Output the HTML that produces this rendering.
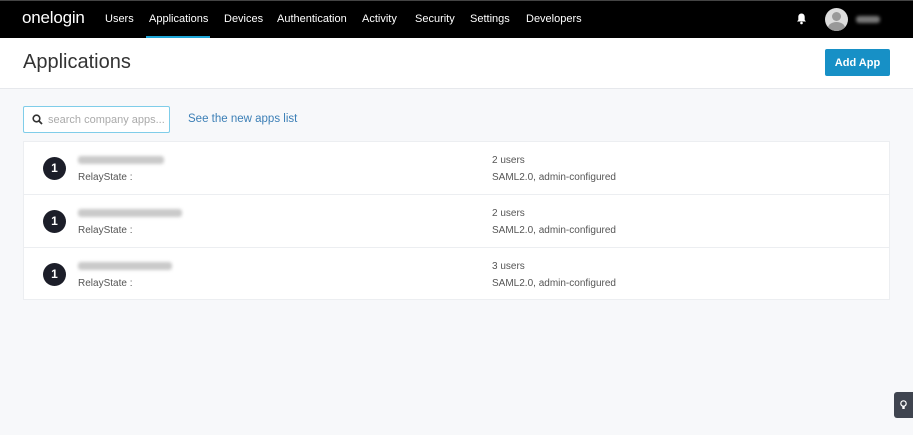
<!DOCTYPE html>
<html><head><meta charset="utf-8"><style>
*{margin:0;padding:0;box-sizing:border-box}
body{width:913px;height:435px;overflow:hidden;background:#f7f8fa;font-family:"Liberation Sans",sans-serif;position:relative}
.nav{position:absolute;top:0;left:0;width:913px;height:38px;background:#000;border-top:1px solid #444}
.logo{position:absolute;left:22px;top:7px;color:#fff;font-size:17px;letter-spacing:-0.2px}
.nav a{position:absolute;top:12px;color:#fff;font-size:11px;text-decoration:none}
.ul{position:absolute;left:146px;top:35px;width:64px;height:3px;background:#1ea6d7}
.hdr{position:absolute;top:38px;left:0;width:913px;height:51px;background:#fff;border-bottom:1px solid #e6e8ec}
.hdr h1{position:absolute;left:23px;top:13px;font-weight:normal;font-size:20px;color:#333}
.btn{position:absolute;left:825px;top:11px;width:65px;height:27px;background:#1790c6;color:#fff;font-size:11px;font-weight:bold;text-align:center;line-height:28px;border-radius:2px}
.search{position:absolute;left:23px;top:106px;width:147px;height:27px;background:#fff;border:1px solid #7fcde9;border-radius:2px}
.search span{position:absolute;left:24px;top:7px;color:#aaa;font-size:11px}
.link{position:absolute;left:188px;top:113px;color:#3c7fb6;font-size:11.5px}
.list{position:absolute;left:23px;top:141px;width:867px;height:159px;background:#fff;border:1px solid #eceef1}
.row{position:relative;height:53px;border-bottom:1px solid #eceef1}
.row:last-child{border-bottom:none}
.ic{position:absolute;left:19px;top:15px;width:23px;height:23px;border-radius:50%;background:#1c1e29;color:#fff;font-weight:bold;font-size:12px;text-align:center;line-height:23px}
.bl{position:absolute;left:54px;top:14px;height:8px;background:#c9c9c9;border-radius:3px;filter:blur(1.5px)}
.rs{position:absolute;left:54px;top:30px;font-size:10px;color:#555}
.u{position:absolute;left:468px;top:13px;font-size:10px;color:#555}
.s{position:absolute;left:468px;top:30px;font-size:10px;color:#555}
.tip{position:absolute;left:894px;top:392px;width:19px;height:26px;background:#3f444f;border-radius:3px 0 0 3px}
</style></head><body>
<div class="nav">
<div class="logo">onelogin</div>
<a style="left:105px">Users</a><a style="left:149px">Applications</a><a style="left:224px">Devices</a><a style="left:277px">Authentication</a><a style="left:362px">Activity</a><a style="left:415px">Security</a><a style="left:470px">Settings</a><a style="left:526px">Developers</a>
<div class="ul"></div>
<svg style="position:absolute;left:796px;top:12px" width="11" height="12" viewBox="0 0 11 12"><path d="M5.5 0.5c-2 0-3.2 1.5-3.2 3.5v3L1 8.5h9L8.7 7V4c0-2-1.2-3.5-3.2-3.5z" fill="#fff"/><circle cx="5.5" cy="10" r="1.3" fill="#fff"/></svg>
<div style="position:absolute;left:825px;top:7px;width:23px;height:23px;border-radius:50%;background:#ddd;overflow:hidden"><div style="position:absolute;left:7px;top:4px;width:9px;height:9px;border-radius:50%;background:#999"></div><div style="position:absolute;left:3px;top:14px;width:17px;height:12px;border-radius:50%;background:#999"></div></div>
<div style="position:absolute;left:856px;top:15px;width:24px;height:7px;background:#777;border-radius:3px;filter:blur(1.5px)"></div>
</div>
<div class="hdr"><h1>Applications</h1><div class="btn">Add App</div></div>
<div class="search"><svg style="position:absolute;left:8px;top:7px" width="11" height="11" viewBox="0 0 11 11"><circle cx="4.5" cy="4.5" r="3.3" fill="none" stroke="#333" stroke-width="1.6"/><path d="M7 7l3 3" stroke="#333" stroke-width="1.8"/></svg><span>search company apps...</span></div>
<div class="link">See the new apps list</div>
<div class="list">
<div class="row"><div class="ic">1</div><div class="bl" style="width:86px"></div><div class="rs">RelayState :</div><div class="u">2 users</div><div class="s">SAML2.0, admin-configured</div></div>
<div class="row"><div class="ic">1</div><div class="bl" style="width:104px"></div><div class="rs">RelayState :</div><div class="u">2 users</div><div class="s">SAML2.0, admin-configured</div></div>
<div class="row"><div class="ic">1</div><div class="bl" style="width:94px"></div><div class="rs">RelayState :</div><div class="u">3 users</div><div class="s">SAML2.0, admin-configured</div></div>
</div>
<div class="tip"><svg style="position:absolute;left:6px;top:8px" width="7" height="10" viewBox="0 0 7 10"><circle cx="3.5" cy="3.5" r="2.7" fill="none" stroke="#fff" stroke-width="1.2"/><rect x="2.3" y="6.5" width="2.4" height="2.5" fill="#fff"/></svg></div>
</body></html>
